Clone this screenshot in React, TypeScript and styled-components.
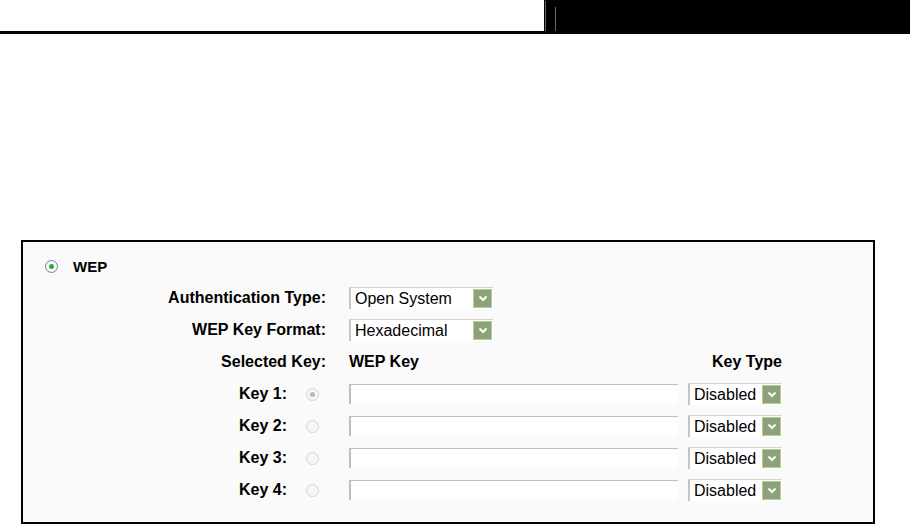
import React from 'react'
import styled, { createGlobalStyle } from 'styled-components';

const GlobalStyle = createGlobalStyle`
    html, body {
        margin: 0;
        padding: 0;
        background: #fff;
    }
    body {
        font-family: "Liberation Sans", Arial, sans-serif;
        color: #000;
    }
`;

const Page = styled.div`
    width: 910px;
    height: 524px;
    overflow: hidden;
    display: flex;
    flex-direction: column;
`;

const Header = styled.header`
    display: flex;
    height: 31px;
    border-bottom: 3px solid #000;
`;

const HeaderBlank = styled.div`
    width: 544px;
    background: #fff;
`;

const HeaderDark = styled.div`
    flex: 1;
    background: #000;
    display: flex;
    align-items: flex-end;
    gap: 9px;
    padding-left: 1px;
`;

const Rule = styled.div`
    width: 1px;
    height: ${props => props.$h}px;
    background: #6a6a6a;
`;

const Panel = styled.section`
    box-sizing: border-box;
    margin: 206px 0 0 21px;
    width: 854px;
    height: 284px;
    border: 2px solid #000;
    background: #fafafa;
    padding-top: 9px;
`;

const TopRow = styled.div`
    display: flex;
    align-items: center;
    height: 31px;
    padding-left: 22px;
    gap: 15px;
`;

const Title = styled.span`
    font-weight: bold;
    font-size: 15px;
`;

const Grid = styled.div`
    display: grid;
    grid-template-columns: 264px 39px 352px 104px;
    grid-auto-rows: 32px;
    align-items: center;
`;

const Label = styled.div`
    grid-column: ${props => props.$wide ? '1 / span 2' : '1'};
    text-align: right;
    font-weight: bold;
    font-size: 16px;
`;

const Field = styled.div`
    grid-column: 3;
    padding-left: 23px;
    display: flex;
    align-items: center;
`;

const TypeCell = styled.div`
    grid-column: 4;
    padding-left: 10px;
    display: flex;
    align-items: center;
    justify-content: ${props => props.$right ? 'flex-end' : 'flex-start'};
`;

const Heading = styled.span`
    font-weight: bold;
    font-size: 16px;
`;

const RadioCell = styled.div`
    grid-column: 2;
    display: flex;
    justify-content: center;
    padding-left: 11px;
`;

const Radio = styled.span`
    box-sizing: border-box;
    width: 13px;
    height: 13px;
    border-radius: 50%;
    border: 1px solid ${props => props.$disabled ? '#d2d2d2' : '#6f8aa6'};
    background: ${props => props.$disabled ? '#f6f6f6' : 'radial-gradient(circle, #ffffff 40%, #dfe6ec 100%)'};
    display: flex;
    align-items: center;
    justify-content: center;
    &::after {
        content: '';
        width: 5px;
        height: 5px;
        border-radius: 50%;
        background: ${props => props.$checked ? (props.$disabled ? '#b9b9b9' : '#2eaa3c') : 'transparent'};
    }
`;

const SelectBox = styled.div`
    box-sizing: border-box;
    width: ${props => props.$w}px;
    height: 22px;
    background: #fff;
    border-top: 1px solid #d6d3cb;
    border-left: 2px solid #c9c5bb;
    display: flex;
    align-items: center;
    justify-content: space-between;
    font-size: 16px;
    padding-left: 4px;
    padding-right: 1px;
`;

const Arrow = styled.span`
    box-sizing: border-box;
    width: 19px;
    height: 19px;
    background: #8aa377;
    border: 1px solid #b7c6a9;
    display: flex;
    align-items: center;
    justify-content: center;
`;

const TextBox = styled.div`
    box-sizing: border-box;
    width: 329px;
    height: 20px;
    background: #fff;
    border-top: 1px solid #c2beb3;
    border-left: 2px solid #c2beb3;
`;

function Select({ value, width }) {
    return (
        <SelectBox $w={width}>
            <span>{value}</span>
            <Arrow>
                <svg width="10" height="7" viewBox="0 0 10 7">
                    <polyline points="1.5,1.5 5,5 8.5,1.5" fill="none" stroke="#fff" strokeWidth="2" />
                </svg>
            </Arrow>
        </SelectBox>
    );
}

const keys = [1, 2, 3, 4];

export default function App() {
    return (
        <Page>
            <GlobalStyle />
            <Header>
                <HeaderBlank />
                <HeaderDark>
                    <Rule $h={30} />
                    <Rule $h={24} />
                </HeaderDark>
            </Header>
            <Panel>
                <TopRow>
                    <Radio $checked />
                    <Title>WEP</Title>
                </TopRow>
                <Grid>
                    <Label $wide>Authentication Type:</Label>
                    <Field><Select value="Open System" width={144} /></Field>
                    <div />

                    <Label $wide>WEP Key Format:</Label>
                    <Field><Select value="Hexadecimal" width={144} /></Field>
                    <div />

                    <Label $wide>Selected Key:</Label>
                    <Field><Heading>WEP Key</Heading></Field>
                    <TypeCell $right><Heading>Key Type</Heading></TypeCell>

                    {keys.map(n => (
                        <React.Fragment key={n}>
                            <Label>Key {n}:</Label>
                            <RadioCell><Radio $disabled $checked={n === 1} /></RadioCell>
                            <Field><TextBox /></Field>
                            <TypeCell><Select value="Disabled" width={94} /></TypeCell>
                        </React.Fragment>
                    ))}
                </Grid>
            </Panel>
        </Page>
    )
}
